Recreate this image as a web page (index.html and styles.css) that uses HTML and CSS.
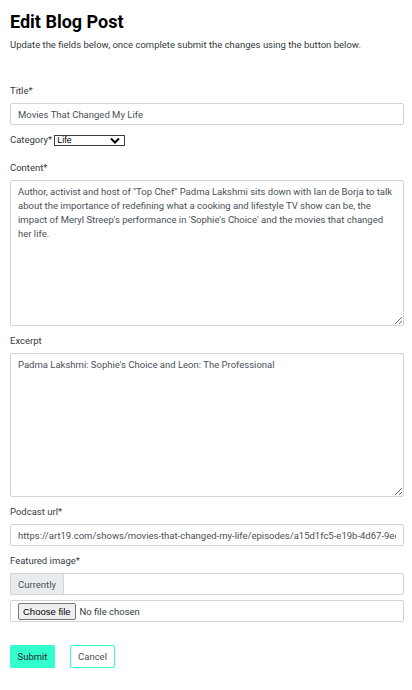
FILE: index.html
```html
<!DOCTYPE html>
<html>
<head>
<meta charset="utf-8">
<link rel="stylesheet" href="styles.css">
</head>
<body>
<main class="page">
  <h1 class="title">Edit Blog Post</h1>
  <p class="lead">Update the fields below, once complete submit the changes using the button below.</p>
  <form class="form">
    <div class="field">
      <label class="label">Title*</label>
      <input class="control" type="text" value="Movies That Changed My Life">
    </div>
    <div class="field inline">
      <label class="label">Category*</label>
      <select class="select"><option>Life</option></select>
    </div>
    <div class="field">
      <label class="label">Content*</label>
      <textarea class="control area">Author, activist and host of "Top Chef" Padma Lakshmi sits down with Ian de Borja to talk about the importance of redefining what a cooking and lifestyle TV show can be, the impact of Meryl Streep's performance in 'Sophie's Choice' and the movies that changed her life.</textarea>
    </div>
    <div class="field">
      <label class="label">Excerpt</label>
      <textarea class="control area area-short">Padma Lakshmi: Sophie's Choice and Leon: The Professional</textarea>
    </div>
    <div class="field">
      <label class="label">Podcast url*</label>
      <input class="control" type="text" value="https://art19.com/shows/movies-that-changed-my-life/episodes/a15d1fc5-e19b-4d67-9ec1-5d1f0">
    </div>
    <div class="field">
      <label class="label">Featured image*</label>
      <div class="group">
        <span class="addon">Currently</span>
        <span class="group-fill"></span>
      </div>
      <label class="filebox">
        <span class="file-btn">Choose file</span>
        <span class="file-name">No file chosen</span>
      </label>
    </div>
    <div class="actions">
      <span class="btn btn-primary">Submit</span>
      <span class="btn btn-outline">Cancel</span>
    </div>
  </form>
</main>
</body>
</html>
```
FILE: styles.css
```css
* { box-sizing: border-box; }
html, body { margin: 0; padding: 0; background: #fff; }
body { font-family: Roboto, "Liberation Sans", sans-serif; color: #343a40; }
.page { padding: 12px 8px 0 10px; }
.title { font-family: Roboto, sans-serif; font-weight: 700; font-size: 18px; line-height: 20px; margin: 0 0 6px; color: #000; }
.lead { font-size: 9.5px; line-height: 14px; margin: 0 0 32px; color: #343a40; }
.form { display: flex; flex-direction: column; }
.field { display: flex; flex-direction: column; margin-bottom: 8px; }
.label { font-size: 9.5px; line-height: 14px; margin-bottom: 5px; color: #343a40; }
.inline { flex-direction: row; align-items: center; margin-top: 0; margin-bottom: 14px; }
.inline .label { margin: 0 2px 0 0; }
.control { width: 100%; height: 22px; border: 1px solid #ced4da; border-radius: 2px; padding: 0 7px; font-family: Roboto, sans-serif; font-size: 9.5px; color: #495057; background: #fff; outline: none; }
.area { height: 146px; padding: 4px 7px; line-height: 14px; resize: vertical; }
.area-short { height: 144px; }
.select {
  appearance: none; -webkit-appearance: none;
  font-family: "Liberation Sans", Arial, sans-serif; font-size: 9px; line-height: 9px;
  height: 11px; width: 71px; padding: 0 0 0 2px;
  border: 1px solid #3c3c3c; border-radius: 0; color: #000;
  background: #fff url("data:image/svg+xml,%3Csvg xmlns='http://www.w3.org/2000/svg' width='10' height='7' viewBox='0 0 10 7'%3E%3Cpath d='M1 1.5l4 4 4-4' fill='none' stroke='%23000' stroke-width='2'/%3E%3C/svg%3E") no-repeat right 4px center / 10px 7px;
}
.group { display: flex; height: 22px; margin-bottom: 5px; }
.addon { display: flex; align-items: center; padding: 0 7px; background: #e9ecef; border: 1px solid #ced4da; border-radius: 2px 0 0 2px; font-size: 9.5px; color: #495057; }
.group-fill { flex: 1; border: 1px solid #ced4da; border-left: 0; border-radius: 0 2px 2px 0; }
.filebox { height: 22px; border: 1px solid #ced4da; border-radius: 2px; display: flex; align-items: center; padding: 0 7px; gap: 4px; }
.file-btn { font-family: "Liberation Sans", Arial, sans-serif; font-size: 9.5px; color: #000; background: #efefef; border: 1px solid #767676; border-radius: 2px; padding: 2px 4px 2px; line-height: 11px; }
.file-name { font-family: Roboto, sans-serif; font-size: 9.5px; color: #343a40; }
.actions { display: flex; gap: 15px; margin-top: 15px; }
.btn { display: inline-flex; align-items: center; justify-content: center; font-size: 9.5px; height: 23px; width: 45px; border-radius: 2px; cursor: pointer; }
.btn-primary { background: #33ffcc; box-shadow: inset 0 0 0 1px #33ffcc; color: #212529; }
.btn-outline { background: #fff; box-shadow: inset 0 0 0 1px #33ffcc; color: #495057; }
```
